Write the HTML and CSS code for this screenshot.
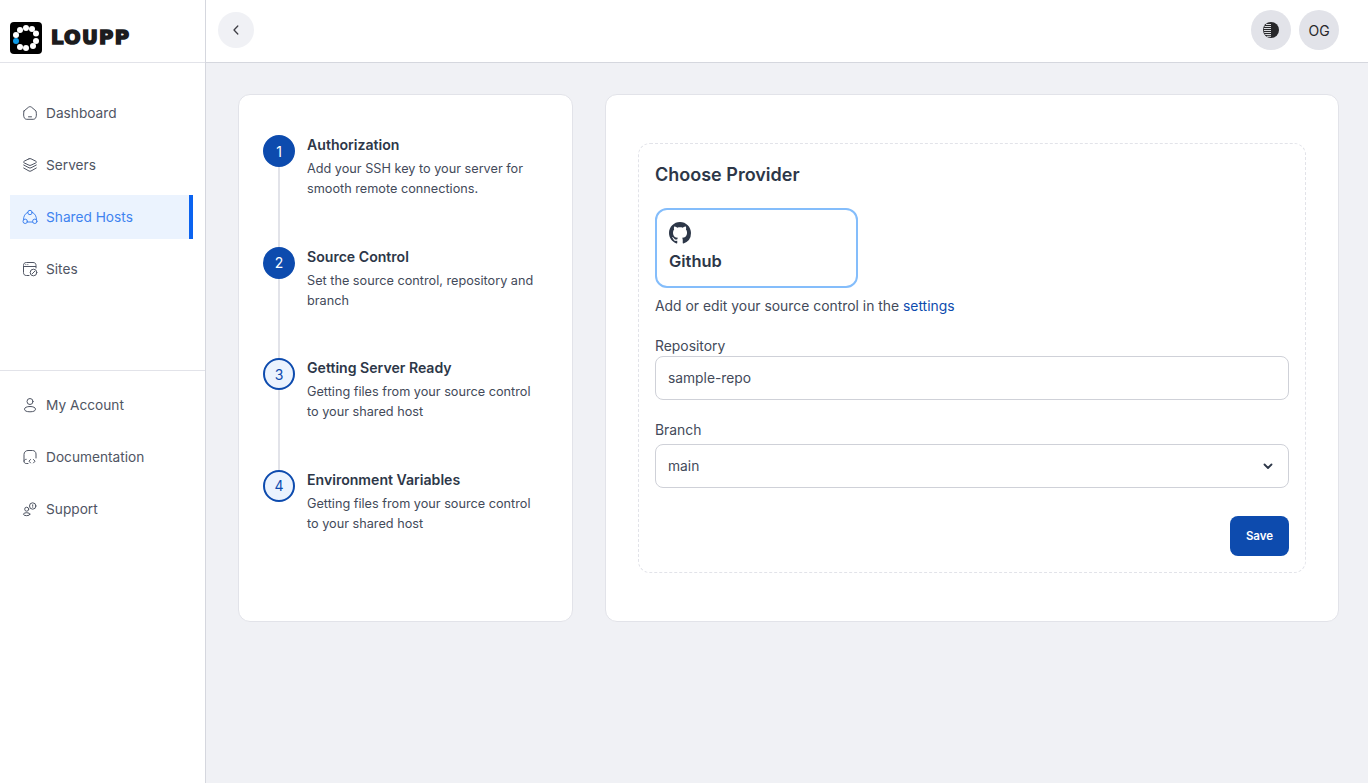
FILE: index.html
```html
<!DOCTYPE html>
<html lang="en">
<head>
<meta charset="utf-8">
<title>Loupp</title>
<link rel="stylesheet" href="styles.css">
</head>
<body>
<div class="app">
  <aside class="sidebar">
    <div class="brand">
      <svg class="brand-mark" viewBox="0 0 32 32" aria-hidden="true">
        <rect width="32" height="32" rx="4" fill="#000"/>
        <g fill="#fff">
          <circle cx="16" cy="6" r="3"/><circle cx="22" cy="7" r="3"/><circle cx="26" cy="11.500" r="3"/>
          <circle cx="26" cy="19" r="3"/><circle cx="23" cy="24" r="3"/><circle cx="16" cy="26" r="3"/>
          <circle cx="10" cy="25" r="3"/><circle cx="6" cy="13" r="3"/><circle cx="10" cy="8" r="3"/>
        </g>
        <circle cx="6" cy="19" r="3" fill="#0d9be8"/>
      </svg>
      <span class="brand-name">LOUPP</span>
    </div>
    <nav class="nav nav-main">
      <a class="nav-item"><svg class="nav-icon" viewBox="0 0 16 16"><path d="M2 6 6.500 2.200c.9-.7 2.100-.7 3 0L14 6c.6 3.200.5 5.500-.4 7-.6 1-1.500 1.300-2.600 1.300H5c-1.100 0-2-.3-2.600-1.300C1.500 11.500 1.400 9.200 2 6Z"/><path d="M6.500 11.800h3"/></svg><span>Dashboard</span></a>
      <a class="nav-item"><svg class="nav-icon" viewBox="0 0 16 16"><path d="M7 1.800c.6-.3 1.400-.3 2 0l4.800 2.400c.8.4.8 1.300 0 1.700L9 8.200c-.6.3-1.400.3-2 0L2.200 5.900c-.8-.4-.8-1.300 0-1.700L7 1.800Z"/><path d="M1.700 8 7 10.800c.6.300 1.400.3 2 0L14.300 8"/><path d="M1.700 11 7 14c.6.300 1.400.3 2 0l5.300-3"/></svg><span>Servers</span></a>
      <a class="nav-item nav-item-active"><svg class="nav-icon" viewBox="0 0 16 16"><circle cx="8" cy="3.500" r="2.200"/><circle cx="3.200" cy="12.300" r="2.200"/><circle cx="12.800" cy="12.300" r="2.200"/><path d="M5.900 3.200C3 4.500 1.500 7.300 1.500 10.500M10.100 3.200c2.900 1.300 4.400 4.100 4.400 7.300M5.400 13h5.200"/></svg><span>Shared Hosts</span></a>
      <a class="nav-item"><svg class="nav-icon" viewBox="0 0 16 16"><path d="M7 14.500H4.500c-2 0-3-1-3-3V4.500c0-2 1-3 3-3h6.500c2 0 3 1 3 3V7"/><path d="M1.700 5.500h12"/><path d="M3.800 3.600h.1M5.800 3.600h.1"/><circle cx="11.500" cy="11.500" r="3.300"/><path d="m10.300 12.700 2.400-2.400"/></svg><span>Sites</span></a>
    </nav>
    <nav class="nav nav-secondary">
      <a class="nav-item"><svg class="nav-icon" viewBox="0 0 16 16"><circle cx="8" cy="4.500" r="3"/><path d="M8 9.500c-3.500 0-5.500 1.100-5.500 2.700S4.500 14.800 8 14.800s5.500-1 5.500-2.600S11.500 9.500 8 9.500Z"/></svg><span>My Account</span></a>
      <a class="nav-item"><svg class="nav-icon" viewBox="0 0 16 16"><path d="M6 14.500H4.200c-1.300 0-2.200-.9-2.200-2.200V5.500C2 3.200 3.800 1.500 6 1.500h4.500c2 0 3.500 1.500 3.500 3.500v4"/><path d="M2 12.300c0-1.200.9-2 2.200-2"/><path d="m8.500 10.500-1.500 1.700 1.500 1.700M11.500 10.500l1.500 1.700-1.500 1.700"/></svg><span>Documentation</span></a>
      <a class="nav-item"><svg class="nav-icon" viewBox="0 0 16 16"><circle cx="4.700" cy="8.200" r="2"/><ellipse cx="4.700" cy="13.200" rx="3.200" ry="1.500"/><circle cx="10.700" cy="5" r="3.200"/><path d="M10.700 3.800v1.400M10.700 6.200v.1"/></svg><span>Support</span></a>
    </nav>
  </aside>

  <div class="content">
    <header class="topbar">
      <button class="round-btn back-btn" aria-label="Back">
        <svg viewBox="0 0 16 16" class="back-icon"><path d="M9.800 4 6 8l3.800 4"/></svg>
      </button>
      <div class="topbar-right">
        <button class="round-btn avatar-btn" aria-label="Theme">
          <svg viewBox="0 0 16 16" class="theme-icon">
            <circle cx="8" cy="8" r="8" fill="#27272a"/>
            <path d="M3 2.500h5M1.600 4.500H8M.9 6.500H8M.9 8.500H8M1.200 10.500H8M2.200 12.500H8M4 14.300h4" stroke="#eceef2" stroke-width="0.900" fill="none"/>
          </svg>
        </button>
        <button class="round-btn avatar-btn avatar-text">OG</button>
      </div>
    </header>

    <main class="main">
      <section class="card steps-card">
        <ol class="steps">
          <li class="step step-done">
            <span class="step-num">1</span>
            <div class="step-body"><h3 class="step-title">Authorization</h3><p class="step-desc">Add your SSH key to your server for smooth remote connections.</p></div>
          </li>
          <li class="step step-done">
            <span class="step-num">2</span>
            <div class="step-body"><h3 class="step-title">Source Control</h3><p class="step-desc">Set the source control, repository and branch</p></div>
          </li>
          <li class="step">
            <span class="step-num">3</span>
            <div class="step-body"><h3 class="step-title">Getting Server Ready</h3><p class="step-desc">Getting files from your source control to your shared host</p></div>
          </li>
          <li class="step">
            <span class="step-num">4</span>
            <div class="step-body"><h3 class="step-title">Environment Variables</h3><p class="step-desc">Getting files from your source control to your shared host</p></div>
          </li>
        </ol>
      </section>

      <section class="card form-card">
        <div class="dashed">
          <h2 class="form-title">Choose Provider</h2>
          <div class="provider">
            <svg class="provider-icon" viewBox="0 0 16 16"><path fill-rule="evenodd" d="M8 0C3.580 0 0 3.580 0 8c0 3.540 2.290 6.530 5.470 7.590.4.070.55-.17.550-.38 0-.19-.01-.82-.01-1.490-2.010.37-2.530-.49-2.690-.94-.09-.23-.48-.94-.82-1.130-.28-.15-.68-.52-.01-.53.630-.01 1.080.58 1.230.82.720 1.210 1.870.87 2.330.66.070-.52.280-.87.510-1.070-1.780-.2-3.640-.89-3.640-3.950 0-.87.310-1.590.820-2.150-.08-.2-.36-1.020.08-2.120 0 0 .67-.21 2.200.82.640-.18 1.320-.27 2-.27s1.360.09 2 .27c1.530-1.040 2.200-.82 2.200-.82.440 1.100.16 1.920.08 2.120.51.560.82 1.270.82 2.150 0 3.070-1.870 3.750-3.650 3.950.29.250.54.730.54 1.480 0 1.070-.01 1.930-.01 2.200 0 .21.150.46.550.38A8.010 8.010 0 0 0 16 8c0-4.420-3.580-8-8-8Z"/></svg>
            <span class="provider-name">Github</span>
          </div>
          <p class="help">Add or edit your source control in the <a class="link">settings</a></p>
          <label class="label label-repo" for="repo">Repository</label>
          <input class="field" id="repo" value="sample-repo">
          <label class="label label-branch" for="branch">Branch</label>
          <div class="field select-field" id="branch">
            <span>main</span>
            <svg viewBox="0 0 16 16" class="chevron"><path d="m4.500 6.500 3.500 3.500 3.500-3.500"/></svg>
          </div>
          <div class="actions"><button class="save">Save</button></div>
        </div>
      </section>
    </main>
  </div>
</div>
</body>
</html>
```
FILE: styles.css
```css
* { box-sizing: border-box; }
html, body { margin: 0; height: 100%; }
body {
  font-family: Inter, "Noto Sans", "Liberation Sans", sans-serif;
  color: #2d3748;
  background: #f0f1f5;
  overflow: hidden;
}
h2, h3, p, ol { margin: 0; padding: 0; }
ol { list-style: none; }
button { font-family: inherit; border: 0; cursor: pointer; }

.app { display: flex; height: 783px; }

/* Sidebar */
.sidebar {
  width: 206px;
  flex: none;
  background: #fff;
  border-right: 1px solid #d5d7de;
}
.brand {
  height: 63px;
  border-bottom: 1px solid #e2e3e9;
  display: flex;
  align-items: center;
  gap: 9px;
  padding: 14px 0 0 10px;
}
.brand-mark { width: 32px; height: 32px; flex: none; }
.brand-name {
  font-family: "DejaVu Sans", sans-serif;
  font-weight: 700;
  font-size: 19.500px;
  line-height: 20px;
  letter-spacing: 1.300px;
  color: #1c1c1e;
  -webkit-text-stroke: 1.600px #1c1c1e;
}
.nav { display: flex; flex-direction: column; gap: 8px; }
.nav-main { height: 308px; padding-top: 28px; border-bottom: 1px solid #e2e3e9; }
.nav-secondary { padding-top: 12px; }
.nav-item {
  height: 44px;
  width: 183px;
  margin-left: 10px;
  padding-left: 12px;
  display: flex;
  align-items: center;
  gap: 8px;
  font-size: 13.700px;
  color: #4f5563;
}
.nav-icon {
  width: 16px;
  height: 16px;
  flex: none;
  fill: none;
  stroke: currentColor;
  stroke-width: 1;
  stroke-linecap: round;
  stroke-linejoin: round;
}
.nav-item-active {
  background: #ebf3fe;
  color: #3f83f0;
  border-right: 4px solid #0b63f0;
}

/* Top bar */
.content { flex: 1; min-width: 0; display: flex; flex-direction: column; }
.topbar {
  height: 63px;
  flex: none;
  background: #fff;
  border-bottom: 1px solid #d5d7de;
  padding: 0 29px 2px 12px;
  display: flex;
  align-items: center;
  justify-content: space-between;
}
.topbar-right { display: flex; gap: 8px; }
.round-btn {
  border-radius: 50%;
  display: flex;
  align-items: center;
  justify-content: center;
  padding: 0;
}
.back-btn { width: 36px; height: 36px; background: #f0f1f5; }
.back-icon { width: 16px; height: 16px; fill: none; stroke: #3f3f46; stroke-width: 1.300; stroke-linecap: round; stroke-linejoin: round; }
.avatar-btn { width: 40px; height: 40px; background: #e2e3e9; }
.avatar-text { font-size: 14px; color: #27272a; }
.theme-icon { width: 16px; height: 16px; }

/* Main */
.main {
  flex: 1;
  padding: 31px 29px 0 32px;
  display: flex;
  align-items: flex-start;
  gap: 32px;
}
.card {
  background: #fff;
  border: 1px solid #e2e3e9;
  border-radius: 12px;
  height: 528px;
}
.steps-card { width: 335px; flex: none; padding: 40px 24px 0; }
.step {
  position: relative;
  display: flex;
  gap: 12px;
  height: 111.670px;
}
.step:not(:last-child)::before {
  content: "";
  position: absolute;
  left: 15px;
  top: 32px;
  bottom: 0;
  width: 2px;
  background: #e2e3e9;
}
.step-num {
  width: 32px;
  height: 32px;
  flex: none;
  border-radius: 50%;
  border: 2px solid #0d4bae;
  background: #ebf3fe;
  color: #0d4bae;
  font-size: 14px;
  display: flex;
  align-items: center;
  justify-content: center;
}
.step-done .step-num { background: #0d4bae; color: #fff; }
.step-body { width: 235px; }
.step-title {
  font-size: 14.100px;
  line-height: 20px;
  font-weight: 600;
  color: #2d3748;
  margin-bottom: 4px;
}
.step-desc {
  font-size: 12.700px;
  line-height: 20px;
  color: #434a5a;
}

/* Form */
.form-card { flex: 1; min-width: 0; padding: 48px 32px 0; }
.dashed {
  height: 430px;
  border: 1px dashed #e2e3e9;
  border-radius: 12px;
  padding: 17px 16px 16px;
  display: flex;
  flex-direction: column;
}
.form-title {
  font-size: 18px;
  line-height: 28px;
  font-weight: 600;
  color: #2d3748;
}
.provider {
  margin-top: 19px;
  width: 203px;
  height: 80px;
  border: 2px solid #84bdfb;
  border-radius: 12px;
  padding: 12px 12px;
  display: flex;
  flex-direction: column;
  gap: 5px;
}
.provider-icon { width: 22px; height: 22px; fill: #2d3748; }
.provider-name { font-size: 16.400px; line-height: 24px; font-weight: 600; color: #2d3748; }
.help { margin-top: 8px; font-size: 13.880px; line-height: 20px; color: #434a5a; }
.link { color: #0d4bae; }
.label { font-size: 13.900px; line-height: 20px; color: #434a5a; }
.label-repo { margin-top: 20px; }
.label-branch { margin-top: 20px; }
.field {
  display: flex;
  align-items: center;
  justify-content: space-between;
  width: 100%;
  height: 44px;
  margin-top: 0;
  padding: 0 12px;
  border: 1px solid #cfd1d8;
  border-radius: 8px;
  background: #fff;
  font-family: inherit;
  font-size: 13.800px;
  color: #434a5a;
  outline: none;
}
.label-branch + .field { margin-top: 4px; }
.chevron { width: 16px; height: 16px; fill: none; stroke: #2d3748; stroke-width: 1.800; stroke-linecap: round; stroke-linejoin: round; }
.actions { margin-top: 28px; display: flex; justify-content: flex-end; }
.save {
  width: 59px;
  height: 40px;
  border-radius: 8px;
  background: #0d4bae;
  color: #fff;
  font-size: 11.500px;
  font-weight: 600;
}
```
